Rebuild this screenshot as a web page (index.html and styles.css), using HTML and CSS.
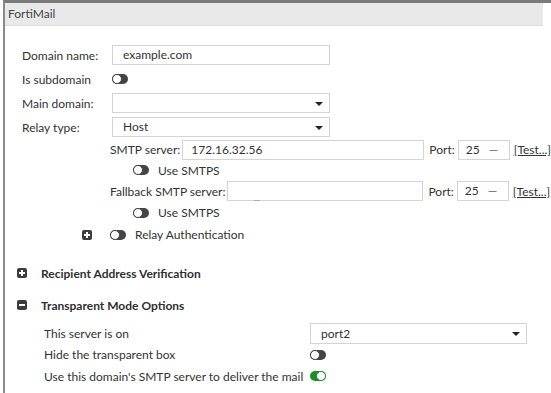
FILE: index.html
```html
<!DOCTYPE html>
<html lang="en">
<head>
    <meta charset="UTF-8">
    <title>FortiMail - Domain</title>
    <link rel="stylesheet" href="styles.css">
</head>
<body>

<div class="panel">
    <div class="panel-title">FortiMail</div>

    <div class="form">
        <div class="row r24">
            <label class="lbl">Domain name:</label>
            <div class="input w-main">example.com</div>
        </div>
        <div class="row r24">
            <label class="lbl">Is subdomain</label>
            <span class="toggle"></span>
        </div>
        <div class="row r24">
            <label class="lbl">Main domain:</label>
            <div class="input select w-main"></div>
        </div>
        <div class="row r24">
            <label class="lbl">Relay type:</label>
            <div class="input select w-main">Host</div>
        </div>

        <div class="row sub h21">
            <span class="sublbl">SMTP server:</span>
            <div class="input grow">172.16.32.56</div>
            <span class="port-lbl">Port:</span>
            <div class="input port">25 <span class="dash">&mdash;</span></div>
            <a class="test">[Test...]</a>
        </div>
        <div class="row opt h20">
            <span class="toggle"></span>
            <span>Use SMTPS</span>
        </div>
        <div class="row sub h22">
            <span class="sublbl">Fallback SMTP server:</span>
            <div class="input grow"><span class="caret-mark"></span></div>
            <span class="port-lbl">Port:</span>
            <div class="input port">25 <span class="dash">&mdash;</span></div>
            <a class="test">[Test...]</a>
        </div>
        <div class="row opt h21">
            <span class="toggle"></span>
            <span>Use SMTPS</span>
        </div>
        <div class="row auth h23">
            <span class="box plus"></span>
            <span class="toggle"></span>
            <span>Relay Authentication</span>
        </div>
    </div>

    <div class="section first">
        <span class="box plus"></span>
        <span>Recipient Address Verification</span>
    </div>
    <div class="section">
        <span class="box minus"></span>
        <span>Transparent Mode Options</span>
    </div>

    <div class="tp">
        <div class="tp-row h22">
            <span class="tp-lbl">This server is on</span>
            <div class="input select w-port">port2</div>
        </div>
        <div class="tp-row h21">
            <span class="tp-lbl">Hide the transparent box</span>
            <span class="toggle"></span>
        </div>
        <div class="tp-row h22">
            <span class="tp-lbl">Use this domain's SMTP server to deliver the mail</span>
            <span class="toggle on"></span>
        </div>
    </div>
</div>

</body>
</html>
```

FILE: styles.css
```css
body {
    margin: 0;
    padding: 0;
    background: #fff;
    font-family: Lato, "Open Sans", Arial, sans-serif;
    font-size: 12px;
    color: #333;
}
.panel {
    margin-left: 3px;
    border-left: 2px solid #8a8a8a;
    border-top: 3px solid #7a7a7a;
    height: 390px;
    overflow: hidden;
}
.panel-title {
    height: 22px;
    line-height: 21px;
    background: #e9e9e9;
    border-bottom: 1px solid #dcdcdc;
    margin-right: 8px;
    padding-left: 3px;
    color: #444;
}
.form {
    padding: 17px 0 0 17px;
}
.row {
    display: flex;
    align-items: center;
}
.r24 { height: 24px; }
.h20 { height: 20px; }
.h21 { height: 21px; }
.h22 { height: 22px; }
.h23 { height: 23px; }
.lbl {
    width: 90px;
}
.input {
    box-sizing: border-box;
    height: 20px;
    border: 1px solid #d4d4d4;
    background: #fff;
    padding: 0 10px;
    line-height: 18px;
    position: relative;
}
.w-main { width: 218px; }
.w-port { width: 217px; height: 21px; line-height: 19px; }
.select::after {
    content: "";
    position: absolute;
    right: 6px;
    top: 8px;
    border-left: 4px solid transparent;
    border-right: 4px solid transparent;
    border-top: 4px solid #222;
}
.sub {
    padding-left: 88px;
}
.sublbl {
    margin-right: 2px;
}
.grow {
    flex: 1;
    max-width: 243px;
    padding-left: 8px;
}
.sub .grow { margin-right: 5px; }
.row.sub:nth-of-type(7) .grow { max-width: 196px; }
.caret-mark {
    position: absolute;
    left: 26px;
    bottom: -1px;
    width: 6px;
    height: 1px;
    background: #aaa;
}
.port-lbl {
    margin-right: 3px;
}
.port {
    width: 52px;
    padding-left: 7px;
}
.dash {
    color: #666;
    margin-left: 6px;
}
.test {
    margin-left: 4px;
    color: #333;
    text-decoration: underline;
    cursor: pointer;
}
.opt {
    padding-left: 111px;
}
.opt .toggle { margin-right: 9px; }
.auth {
    padding-left: 60px;
}
.auth .box { margin-right: 18px; }
.auth .toggle { margin-right: 9px; }
.toggle {
    display: inline-block;
    box-sizing: border-box;
    width: 16px;
    height: 10px;
    border-radius: 5px;
    background: #444;
    position: relative;
}
.toggle::after {
    content: "";
    position: absolute;
    left: 0;
    top: 0;
    box-sizing: border-box;
    width: 10px;
    height: 10px;
    border-radius: 50%;
    background: #fff;
    border: 1.5px solid #444;
}
.toggle.on {
    background: #1f8a2a;
}
.toggle.on::after {
    left: 6px;
    border-color: #1f8a2a;
}
.box {
    display: inline-block;
    width: 10px;
    height: 10px;
    border-radius: 2px;
    background: #3c3c3c;
    position: relative;
}
.box::before,
.box::after {
    content: "";
    position: absolute;
    background: #fff;
}
.box::before {
    left: 2px;
    top: 4px;
    width: 6px;
    height: 2px;
}
.plus::after {
    left: 4px;
    top: 2px;
    width: 2px;
    height: 6px;
}
.minus::after { display: none; }
.section {
    display: flex;
    align-items: center;
    height: 22px;
    padding-left: 12px;
    font-weight: bold;
    color: #2f2f2f;
}
.section .box { margin-right: 14px; }
.section.first { margin-top: 16px; margin-bottom: 10px; }
.tp {
    padding: 6px 0 0 39px;
}
.tp-row {
    display: flex;
    align-items: center;
}
.tp-lbl {
    width: 266px;
}
```
